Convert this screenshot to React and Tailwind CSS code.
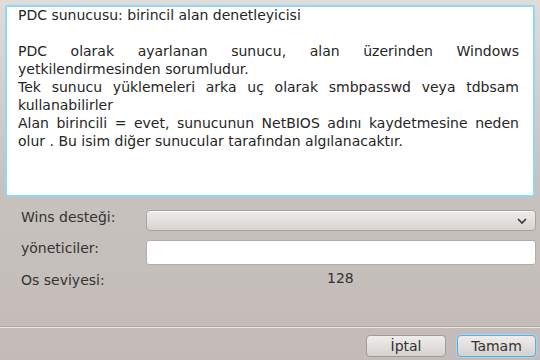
export default function App() {
    const font = { fontFamily: '"DejaVu Sans", Verdana, sans-serif' };

    return (
        <div
            className="w-[540px] h-[360px] flex flex-col bg-gradient-to-b from-[#dfdcda] via-[#c8c2be] to-[#c2bbb7] text-[14px] text-[#333] overflow-hidden"
            style={font}
        >
            <div className="mx-[5px] mt-[5px] h-[192px] rounded-[3px] border-2 border-[#8ed6fa] bg-white pl-[11px] pr-[14px] leading-[18px] text-[#262626]">
                <div className="-mt-[1px]">
                    <p>PDC sunucusu: birincil alan denetleyicisi</p>
                    <p className="h-[18px]"></p>
                    <p className="text-justify">
                        PDC olarak ayarlanan sunucu, alan üzerinden Windows yetkilendirmesinden sorumludur.
                    </p>
                    <p className="text-justify">
                        Tek sunucu yüklemeleri arka uç olarak smbpasswd veya tdbsam kullanabilirler
                    </p>
                    <p className="text-justify">
                        Alan birincili = evet, sunucunun NetBIOS adını kaydetmesine neden olur . Bu isim diğer sunucular tarafından algılanacaktır.
                    </p>
                </div>
            </div>

            <div className="grid grid-cols-[125px_1fr] items-start ml-[21px] mr-[4px] mt-[10px]">
                <span className="leading-[20px]">Wins desteği:</span>
                <div className="mt-[3px] h-[21px] rounded-[4px] border border-[#a9a3a0] bg-gradient-to-b from-[#efedeb] to-[#d7d3d0] flex items-center justify-end pr-[8px] shadow-[inset_0_1px_0_#fff]">
                    <svg width="10" height="6" viewBox="0 0 10 6">
                        <path d="M1 1 L5 5 L9 1" fill="none" stroke="#333" strokeWidth="1.6" />
                    </svg>
                </div>
                <span className="mt-[7px] leading-[20px]">yöneticiler:</span>
                <div className="mt-[9px] h-[25px] rounded-[3px] border border-[#b2aca9] bg-white"></div>
                <span className="mt-[5px] leading-[20px]">Os seviyesi:</span>
                <span className="mt-[3px] leading-[20px] pl-[181px]">128</span>
            </div>

            <div className="flex-1"></div>

            <div className="h-[2px] border-t border-[#aea7a3] border-b-white/60 border-b"></div>

            <div className="flex justify-end gap-[11px] px-[4px] pt-[7px] pb-[3px]">
                <button className="w-[80px] h-[22px] rounded-[4px] border border-[#a29c99] bg-gradient-to-b from-[#efedeb] to-[#d5d1ce] leading-none">
                    İptal
                </button>
                <button className="w-[79px] h-[22px] rounded-[4px] border border-[#5aaee0] bg-gradient-to-b from-[#efedeb] to-[#d5d1ce] leading-none shadow-[0_0_0_1px_#a6d4f0]">
                    Tamam
                </button>
            </div>
        </div>
    );
}
